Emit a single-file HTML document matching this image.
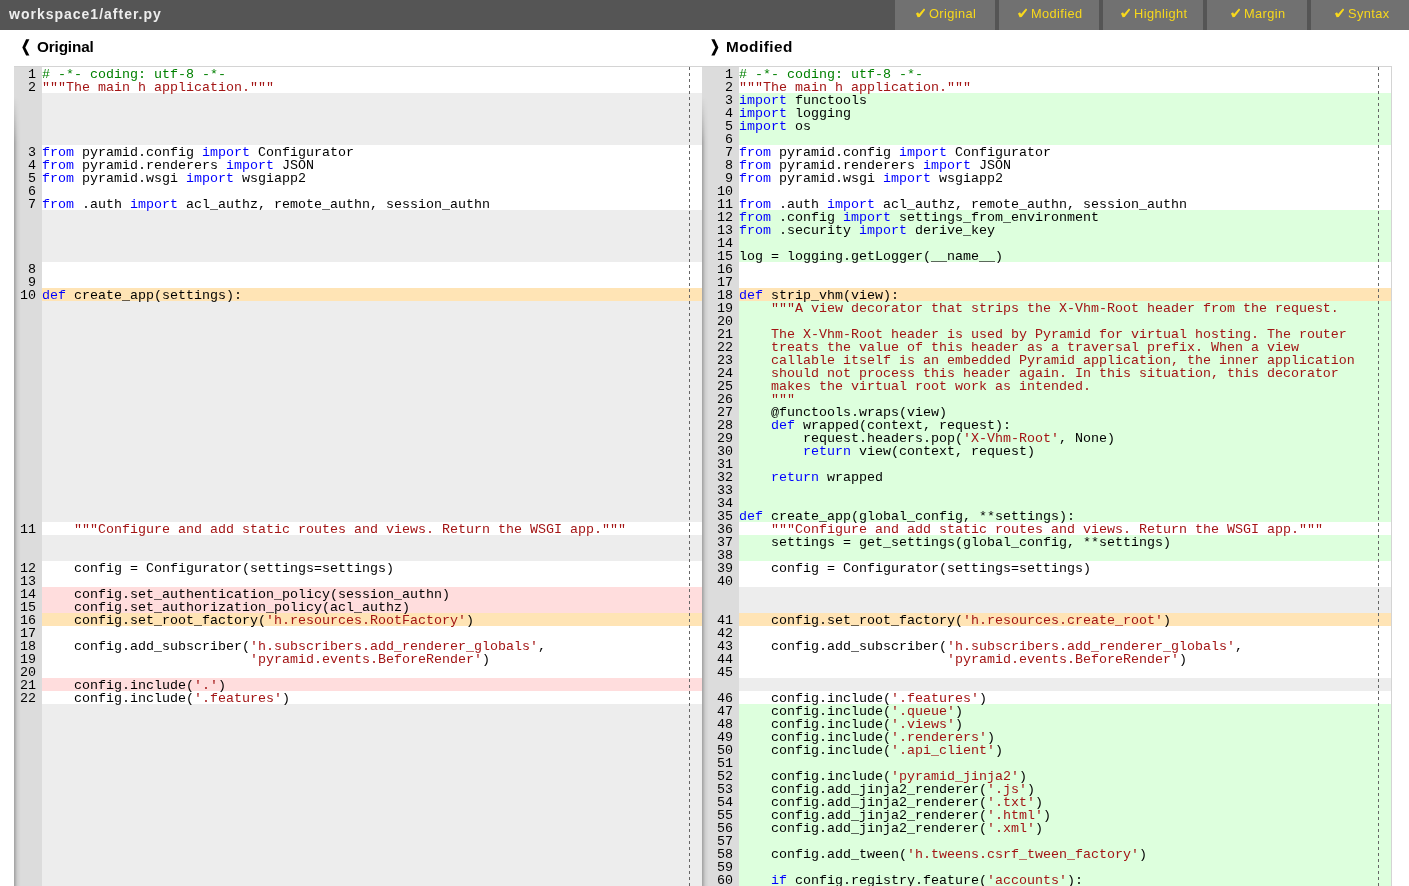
<!DOCTYPE html>
<html><head><meta charset="utf-8"><style>
html,body{margin:0;padding:0;background:#fff;}
body{width:1409px;height:886px;overflow:hidden;position:relative;font-family:"Liberation Sans",sans-serif;}
.hdr{position:absolute;left:0;top:0;width:1409px;height:30px;background:#555;}
.title{will-change:transform;position:absolute;left:9px;top:5px;color:#eee;font-weight:bold;font-size:14px;line-height:18px;white-space:nowrap;letter-spacing:1.0px;}
.btn{position:absolute;top:0;width:100px;height:30px;background:#717171;color:#f8d81c;font-size:12.8px;line-height:30px;white-space:nowrap;display:flex;justify-content:center;align-items:center;box-sizing:border-box;padding-bottom:2px;padding-left:2px;}
.btn span{will-change:transform;margin-left:4px;letter-spacing:0.4px;}
.btn svg{position:relative;top:-1px;}
.h2{will-change:transform;position:absolute;top:37px;font-weight:bold;font-size:15.3px;letter-spacing:-0.15px;line-height:20px;color:#000;white-space:nowrap;}
.ov{position:absolute;left:0;top:0;}
.bt{position:absolute;left:14px;top:66px;width:1378px;height:1px;background:#d4d4d4;}
.br{position:absolute;left:1391px;top:66px;width:1px;height:820px;background:#d4d4d4;}
.pane{position:absolute;top:67px;height:819px;overflow:hidden;background:#ededed;font-family:"Liberation Mono",monospace;font-size:13.33px;line-height:13px;color:#000;}
.gut{position:absolute;left:0;top:0;bottom:0;background:#dcdcdc;}
.shad{position:absolute;left:0;top:0;width:8px;bottom:0;background:linear-gradient(to right,rgba(0,0,0,.24) 0.5px,rgba(0,0,0,.18) 1.5px,rgba(0,0,0,.114) 2.5px,rgba(0,0,0,.064) 3.5px,rgba(0,0,0,.041) 4.5px,rgba(0,0,0,.018) 5.5px,rgba(0,0,0,.005) 6.5px,rgba(0,0,0,0) 7.5px);-webkit-mask-image:linear-gradient(to bottom,transparent 30px,#000 76px);}
.rows{position:absolute;top:0;right:0;will-change:transform;}
.r{height:13px;white-space:pre;line-height:15px;}
.r.n{background:#fff;}
.r.a{background:#ddffdd;}
.r.d{background:#ffdddd;}
.r.ch{background:#ffe4b5;}
.r u{text-decoration:none;display:inline-block;text-align:right;}
.k{font-weight:normal;color:#0000ff;}
.s{font-style:normal;color:#a31515;}
.cm{font-style:normal;color:#008000;}
.mg{position:absolute;top:0;width:1px;bottom:0;background:repeating-linear-gradient(to bottom,#666 0 3px,transparent 3px 6px);}
#pl{left:14px;width:688px;}
#pl .gut{width:28px;}
#pl .rows{left:28px;}
#pl .r u{margin-left:-28px;width:22px;padding-right:6px;}
#pr{left:702px;width:689px;}
#pr .gut{width:37px;}
#pr .rows{left:37px;}
#pr .r u{margin-left:-37px;width:31px;padding-right:6px;}

</style></head><body>
<div class="hdr">
<div class="title">workspace1/after.py</div>
<div class="btn" style="left:895px"><svg width="10" height="10" viewBox="915.3 8 10 10"><path d="M916.3 13.5 L918.3 12.3 L919.4 13.9 L924.2 8.5 L925.7 9.5 L920.0 17.0 L917.9 17.2 Z" fill="#f8d81c"/></svg><span>Original</span></div>
<div class="btn" style="left:999px"><svg width="10" height="10" viewBox="915.3 8 10 10"><path d="M916.3 13.5 L918.3 12.3 L919.4 13.9 L924.2 8.5 L925.7 9.5 L920.0 17.0 L917.9 17.2 Z" fill="#f8d81c"/></svg><span>Modified</span></div>
<div class="btn" style="left:1103px"><svg width="10" height="10" viewBox="915.3 8 10 10"><path d="M916.3 13.5 L918.3 12.3 L919.4 13.9 L924.2 8.5 L925.7 9.5 L920.0 17.0 L917.9 17.2 Z" fill="#f8d81c"/></svg><span>Highlight</span></div>
<div class="btn" style="left:1207px"><svg width="10" height="10" viewBox="915.3 8 10 10"><path d="M916.3 13.5 L918.3 12.3 L919.4 13.9 L924.2 8.5 L925.7 9.5 L920.0 17.0 L917.9 17.2 Z" fill="#f8d81c"/></svg><span>Margin</span></div>
<div class="btn" style="left:1311px"><svg width="10" height="10" viewBox="915.3 8 10 10"><path d="M916.3 13.5 L918.3 12.3 L919.4 13.9 L924.2 8.5 L925.7 9.5 L920.0 17.0 L917.9 17.2 Z" fill="#f8d81c"/></svg><span>Syntax</span></div>
</div>
<div class="h2" style="left:37px">Original</div>
<div class="h2" style="left:726px;letter-spacing:0.5px">Modified</div>
<svg class="ov" width="1409" height="60" viewBox="0 0 1409 60"><path d="M26.1 39.3 L29.4 39.3 L25.3 47.5 L29.4 55.5 L26.1 55.5 L22.3 47.5 Z M714.6 39.3 L711.3 39.3 L715.4 47.5 L711.3 55.5 L714.6 55.5 L718.4 47.5 Z" fill="#000"/></svg>
<div class="bt"></div>
<div class="br"></div>
<div class="pane" id="pl"><div class="gut"></div><div class="shad"></div><div class="rows"><div class="r n"><u>1</u><i class=cm># -*- coding: utf-8 -*-</i></div><div class="r n"><u>2</u><i class=s>&quot;&quot;&quot;The main h application.&quot;&quot;&quot;</i></div><div class="r f"></div><div class="r f"></div><div class="r f"></div><div class="r f"></div><div class="r n"><u>3</u><b class=k>from</b> pyramid.config <b class=k>import</b> Configurator</div><div class="r n"><u>4</u><b class=k>from</b> pyramid.renderers <b class=k>import</b> JSON</div><div class="r n"><u>5</u><b class=k>from</b> pyramid.wsgi <b class=k>import</b> wsgiapp2</div><div class="r n"><u>6</u></div><div class="r n"><u>7</u><b class=k>from</b> .auth <b class=k>import</b> acl_authz, remote_authn, session_authn</div><div class="r f"></div><div class="r f"></div><div class="r f"></div><div class="r f"></div><div class="r n"><u>8</u></div><div class="r n"><u>9</u></div><div class="r ch"><u>10</u><b class=k>def</b> create_app(settings):</div><div class="r f"></div><div class="r f"></div><div class="r f"></div><div class="r f"></div><div class="r f"></div><div class="r f"></div><div class="r f"></div><div class="r f"></div><div class="r f"></div><div class="r f"></div><div class="r f"></div><div class="r f"></div><div class="r f"></div><div class="r f"></div><div class="r f"></div><div class="r f"></div><div class="r f"></div><div class="r n"><u>11</u>    <i class=s>&quot;&quot;&quot;Configure and add static routes and views. Return the WSGI app.&quot;&quot;&quot;</i></div><div class="r f"></div><div class="r f"></div><div class="r n"><u>12</u>    config = Configurator(settings=settings)</div><div class="r n"><u>13</u></div><div class="r d"><u>14</u>    config.set_authentication_policy(session_authn)</div><div class="r d"><u>15</u>    config.set_authorization_policy(acl_authz)</div><div class="r ch"><u>16</u>    config.set_root_factory(<i class=s>&#x27;h.resources.RootFactory&#x27;</i>)</div><div class="r n"><u>17</u></div><div class="r n"><u>18</u>    config.add_subscriber(<i class=s>&#x27;h.subscribers.add_renderer_globals&#x27;</i>,</div><div class="r n"><u>19</u>                          <i class=s>&#x27;pyramid.events.BeforeRender&#x27;</i>)</div><div class="r n"><u>20</u></div><div class="r d"><u>21</u>    config.include(<i class=s>&#x27;.&#x27;</i>)</div><div class="r n"><u>22</u>    config.include(<i class=s>&#x27;.features&#x27;</i>)</div></div><div class="mg" style="left:675px"></div></div>
<div class="pane" id="pr"><div class="gut"></div><div class="shad"></div><div class="rows"><div class="r n"><u>1</u><i class=cm># -*- coding: utf-8 -*-</i></div><div class="r n"><u>2</u><i class=s>&quot;&quot;&quot;The main h application.&quot;&quot;&quot;</i></div><div class="r a"><u>3</u><b class=k>import</b> functools</div><div class="r a"><u>4</u><b class=k>import</b> logging</div><div class="r a"><u>5</u><b class=k>import</b> os</div><div class="r a"><u>6</u></div><div class="r n"><u>7</u><b class=k>from</b> pyramid.config <b class=k>import</b> Configurator</div><div class="r n"><u>8</u><b class=k>from</b> pyramid.renderers <b class=k>import</b> JSON</div><div class="r n"><u>9</u><b class=k>from</b> pyramid.wsgi <b class=k>import</b> wsgiapp2</div><div class="r n"><u>10</u></div><div class="r n"><u>11</u><b class=k>from</b> .auth <b class=k>import</b> acl_authz, remote_authn, session_authn</div><div class="r a"><u>12</u><b class=k>from</b> .config <b class=k>import</b> settings_from_environment</div><div class="r a"><u>13</u><b class=k>from</b> .security <b class=k>import</b> derive_key</div><div class="r a"><u>14</u></div><div class="r a"><u>15</u>log = logging.getLogger(__name__)</div><div class="r n"><u>16</u></div><div class="r n"><u>17</u></div><div class="r ch"><u>18</u><b class=k>def</b> strip_vhm(view):</div><div class="r a"><u>19</u>    <i class=s>&quot;&quot;&quot;A view decorator that strips the X-Vhm-Root header from the request.</i></div><div class="r a"><u>20</u></div><div class="r a"><u>21</u>    <i class=s>The X-Vhm-Root header is used by Pyramid for virtual hosting. The router</i></div><div class="r a"><u>22</u>    <i class=s>treats the value of this header as a traversal prefix. When a view</i></div><div class="r a"><u>23</u>    <i class=s>callable itself is an embedded Pyramid application, the inner application</i></div><div class="r a"><u>24</u>    <i class=s>should not process this header again. In this situation, this decorator</i></div><div class="r a"><u>25</u>    <i class=s>makes the virtual root work as intended.</i></div><div class="r a"><u>26</u>    <i class=s>&quot;&quot;&quot;</i></div><div class="r a"><u>27</u>    @functools.wraps(view)</div><div class="r a"><u>28</u>    <b class=k>def</b> wrapped(context, request):</div><div class="r a"><u>29</u>        request.headers.pop(<i class=s>&#x27;X-Vhm-Root&#x27;</i>, None)</div><div class="r a"><u>30</u>        <b class=k>return</b> view(context, request)</div><div class="r a"><u>31</u></div><div class="r a"><u>32</u>    <b class=k>return</b> wrapped</div><div class="r a"><u>33</u></div><div class="r a"><u>34</u></div><div class="r a"><u>35</u><b class=k>def</b> create_app(global_config, **settings):</div><div class="r n"><u>36</u>    <i class=s>&quot;&quot;&quot;Configure and add static routes and views. Return the WSGI app.&quot;&quot;&quot;</i></div><div class="r a"><u>37</u>    settings = get_settings(global_config, **settings)</div><div class="r a"><u>38</u></div><div class="r n"><u>39</u>    config = Configurator(settings=settings)</div><div class="r n"><u>40</u></div><div class="r f"></div><div class="r f"></div><div class="r ch"><u>41</u>    config.set_root_factory(<i class=s>&#x27;h.resources.create_root&#x27;</i>)</div><div class="r n"><u>42</u></div><div class="r n"><u>43</u>    config.add_subscriber(<i class=s>&#x27;h.subscribers.add_renderer_globals&#x27;</i>,</div><div class="r n"><u>44</u>                          <i class=s>&#x27;pyramid.events.BeforeRender&#x27;</i>)</div><div class="r n"><u>45</u></div><div class="r f"></div><div class="r n"><u>46</u>    config.include(<i class=s>&#x27;.features&#x27;</i>)</div><div class="r a"><u>47</u>    config.include(<i class=s>&#x27;.queue&#x27;</i>)</div><div class="r a"><u>48</u>    config.include(<i class=s>&#x27;.views&#x27;</i>)</div><div class="r a"><u>49</u>    config.include(<i class=s>&#x27;.renderers&#x27;</i>)</div><div class="r a"><u>50</u>    config.include(<i class=s>&#x27;.api_client&#x27;</i>)</div><div class="r a"><u>51</u></div><div class="r a"><u>52</u>    config.include(<i class=s>&#x27;pyramid_jinja2&#x27;</i>)</div><div class="r a"><u>53</u>    config.add_jinja2_renderer(<i class=s>&#x27;.js&#x27;</i>)</div><div class="r a"><u>54</u>    config.add_jinja2_renderer(<i class=s>&#x27;.txt&#x27;</i>)</div><div class="r a"><u>55</u>    config.add_jinja2_renderer(<i class=s>&#x27;.html&#x27;</i>)</div><div class="r a"><u>56</u>    config.add_jinja2_renderer(<i class=s>&#x27;.xml&#x27;</i>)</div><div class="r a"><u>57</u></div><div class="r a"><u>58</u>    config.add_tween(<i class=s>&#x27;h.tweens.csrf_tween_factory&#x27;</i>)</div><div class="r a"><u>59</u></div><div class="r a"><u>60</u>    <b class=k>if</b> config.registry.feature(<i class=s>&#x27;accounts&#x27;</i>):</div></div><div class="mg" style="left:676px"></div></div>

</body></html>
